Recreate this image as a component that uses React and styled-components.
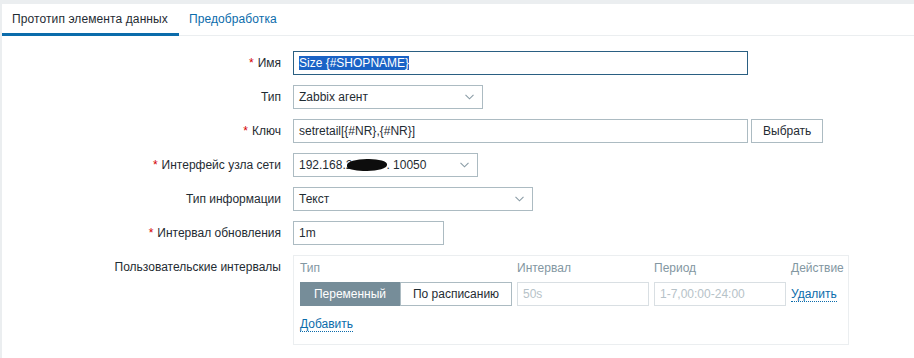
import React from "react";
import styled, { createGlobalStyle } from "styled-components";

const GlobalStyle = createGlobalStyle`
  body {
    margin: 0;
    background: #ebeef0;
    font-family: "Liberation Sans", Arial, sans-serif;
    font-size: 12px;
    color: #1f2c33;
  }
`;

const Page = styled.div`
  margin: 4px 0 0 2px;
  background: #ffffff;
  min-height: 354px;
`;

const TabBar = styled.div`
  display: flex;
  height: 32px;
  box-sizing: border-box;
  border-bottom: 1px solid #ebeef0;
`;

const Tab = styled.div`
  box-sizing: border-box;
  height: 32px;
  margin-bottom: -1px;
  padding: 1px 11px 0 10px;
  line-height: 29px;
  letter-spacing: 0.1px;
  border-bottom: 3px solid ${(p) => (p.$active ? "#0b6cab" : "transparent")};
  color: ${(p) => (p.$active ? "#1f2c33" : "#0b6cab")};
  cursor: pointer;
`;

const Form = styled.div`
  display: grid;
  grid-template-columns: 269px 1fr;
  column-gap: 12px;
  row-gap: 10px;
  padding: 15px 0 0 10px;
`;

const Label = styled.div`
  text-align: right;
  line-height: 24px;
  white-space: nowrap;
`;

const Req = styled.span`
  color: #d40000;
  margin-right: 4px;
`;

const Field = styled.div`
  display: flex;
  align-items: center;
  gap: 3px;
`;

const Input = styled.div`
  box-sizing: border-box;
  width: ${(p) => p.$w}px;
  height: 24px;
  padding: 0 5px;
  border: 1px solid ${(p) => (p.$focus ? "#2a5f82" : "#acbbc2")};
  background: #fff;
  line-height: 22px;
  color: ${(p) => (p.$muted ? "#acbbc2" : "#1f2c33")};
  white-space: nowrap;
  overflow: hidden;
`;

const Selected = styled.span`
  background: #1a63c6;
  color: #fff;
`;

const Select = styled(Input)`
  display: flex;
  align-items: center;
  justify-content: space-between;
  padding-right: 8px;
`;

const Blot = styled.span`
  display: inline-block;
  width: 40px;
  height: 12px;
  margin: 0 -1px 0 -5px;
  background: #0d0d0d;
  border-radius: 50% 45% 50% 40%;
  vertical-align: -2px;
`;

const Button = styled.div`
  box-sizing: border-box;
  height: 24px;
  padding: 0 11px;
  border: 1px solid #acbbc2;
  background: #fff;
  line-height: 22px;
  cursor: pointer;
`;

const IntervalBox = styled.div`
  box-sizing: border-box;
  width: 556px;
  padding: 0 5px 8px 6px;
  border: 1px solid #ebeef0;
`;

const IntervalGrid = styled.div`
  display: grid;
  grid-template-columns: 212px 132px 132px auto;
  column-gap: 5px;
  align-items: center;
`;

const Head = styled.div`
  color: #8397a2;
  line-height: 24px;
  margin-bottom: 2px;
`;

const Toggle = styled.div`
  display: flex;
  width: 212px;
  height: 24px;
  margin-right: -1px;
`;

const ToggleOpt = styled.div`
  box-sizing: border-box;
  flex: ${(p) => p.$flex};
  height: 24px;
  line-height: 22px;
  text-align: center;
  border: 1px solid ${(p) => (p.$on ? "#768d99" : "#acbbc2")};
  background: ${(p) => (p.$on ? "#768d99" : "#fff")};
  color: ${(p) => (p.$on ? "#fff" : "#1f2c33")};
`;

const Disabled = styled(Input)`
  border-color: #d9dfe3;
  color: #b6c2c8;
`;

const Link = styled.span`
  color: #0b6cab;
  border-bottom: 1px dotted #0b6cab;
  cursor: pointer;
`;

const AddRow = styled.div`
  line-height: 24px;
  margin-top: 6px;
`;

const Chevron = () => (
  <svg width="9" height="6" viewBox="0 0 9 6">
    <polyline points="0.5,0.8 4.5,4.8 8.5,0.8" fill="none" stroke="#8a9ca6" strokeWidth="1.1" />
  </svg>
);

export default function App() {
  return (
    <>
      <GlobalStyle />
      <Page>
        <TabBar>
          <Tab $active>Прототип элемента данных</Tab>
          <Tab>Предобработка</Tab>
        </TabBar>
        <Form>
          <Label><Req>*</Req>Имя</Label>
          <Field>
            <Input $w={455} $focus><Selected>Size {"{#SHOPNAME}"}</Selected></Input>
          </Field>

          <Label>Тип</Label>
          <Field>
            <Select $w={190}>Zabbix агент<Chevron /></Select>
          </Field>

          <Label><Req>*</Req>Ключ</Label>
          <Field>
            <Input $w={455}>setretail[{"{#NR}"},{"{#NR}"}]</Input>
            <Button>Выбрать</Button>
          </Field>

          <Label><Req>*</Req>Интерфейс узла сети</Label>
          <Field>
            <Select $w={185}><span>192.168.2<Blot />. 10050</span><Chevron /></Select>
          </Field>

          <Label>Тип информации</Label>
          <Field>
            <Select $w={240}>Текст<Chevron /></Select>
          </Field>

          <Label><Req>*</Req>Интервал обновления</Label>
          <Field>
            <Input $w={151}>1m</Input>
          </Field>

          <Label>Пользовательские интервалы</Label>
          <IntervalBox>
            <IntervalGrid>
              <Head>Тип</Head>
              <Head>Интервал</Head>
              <Head>Период</Head>
              <Head>Действие</Head>
              <Toggle>
                <ToggleOpt $on $flex="0 0 100px">Переменный</ToggleOpt>
                <ToggleOpt $flex="1">По расписанию</ToggleOpt>
              </Toggle>
              <Disabled $w={132}>50s</Disabled>
              <Disabled $w={132}>1-7,00:00-24:00</Disabled>
              <div><Link>Удалить</Link></div>
            </IntervalGrid>
            <AddRow><Link>Добавить</Link></AddRow>
          </IntervalBox>
        </Form>
      </Page>
    </>
  );
}
